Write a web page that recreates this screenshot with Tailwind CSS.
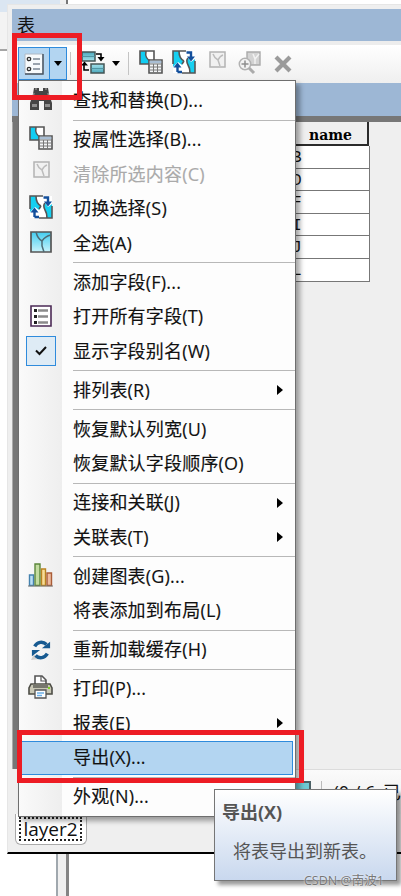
<!DOCTYPE html>
<html lang="zh-CN">
<head>
  <meta charset="UTF-8">
  <meta name="viewport" content="width=device-width, initial-scale=1.0">
  <title>表</title>
  <script src="https://cdn.jsdelivr.net/npm/@tailwindcss/browser@4"></script>
  <style>
    body { font-family: 'Open Sans', 'Noto Sans CJK SC', sans-serif; }
  </style>
</head>
<body class="relative w-[401px] h-[896px] overflow-hidden bg-white text-[18px] text-[#111]">

  <!-- icon sprites -->
  <svg class="absolute w-0 h-0">
    <defs>
      <linearGradient id="cyan" x1="0" y1="0" x2="0" y2="1"><stop offset="0" stop-color="#42cdf0"/><stop offset="1" stop-color="#c9f3fb"/></linearGradient>
      <linearGradient id="teal" x1="0" y1="0" x2="0" y2="1"><stop offset="0" stop-color="#4aa7bb"/><stop offset=".5" stop-color="#b5edf4"/><stop offset="1" stop-color="#4aa7bb"/></linearGradient>
    </defs>
    <symbol id="i-select" viewBox="0 0 24 24">
      <path d="M1 1h14v13H1z" fill="#fff"/>
      <path d="M1 1h6c-1 5 1 9 5 10v3H1z" fill="#11cdf2"/>
      <path d="M7 1c-1 5 1 9 5 10M1 1h14v13H1z" fill="none" stroke="#555" stroke-width="1.600"/>
      <path d="M10 10h13v13H10z" fill="#f3f5f7" stroke="#555" stroke-width="1.600"/>
      <path d="M10.700 10.700h11.600v2.600H10.700z" fill="#a9bed4"/>
      <path d="M10 14h13M10 17h13M10 20h13M14.500 14v9M18.500 14v9" stroke="#777" stroke-width="1"/>
    </symbol>
    <symbol id="i-switch" viewBox="0 0 24 24">
      <path d="M1 1h22v22H1z" fill="#fff"/>
      <path d="M1 1h6c0 5 1 8 5 10l-2 4-4-3-5 5zM16 8l3 4 4-3v14h-5c0-3 0-5-2-8-1-2-2-5 0-7z" fill="#15d0f1"/>
      <path d="M14 1H1v13M7 1c0 5 1 8 5 10M16 8c-2 2-1 5 0 7 2 3 2 5 2 8M10 23h13V11M10 14l2-3" fill="none" stroke="#555" stroke-width="1.600"/>
      <path d="M14.500 2.500H19V7M5.500 22v-5M5.500 22H10" fill="none" stroke="#134f9c" stroke-width="2.400"/>
      <path d="M15 6.500h8L19 11.500zM1.500 17.500l4-5 4 5z" fill="#134f9c"/>
    </symbol>
    <symbol id="i-clear" viewBox="0 0 17 17">
      <path d="M1 1h15v15H1z" fill="#f1f1f1" stroke="#b3b3b3" stroke-width="1.500"/>
      <path d="M4 3c1 3 3 5 5 6l2 6M14 4c-3 1-4 3-5 5" fill="none" stroke="#bcbcbc" stroke-width="1.500"/>
    </symbol>
    <symbol id="i-all" viewBox="0 0 22 22">
      <path d="M1 1h20v20H1z" fill="url(#cyan)" stroke="#555" stroke-width="1.700"/>
      <path d="M6 1c1 4 2 7 6 9v5l2 6M21 4c-5 1-7 3-9 6" fill="none" stroke="#4d6b75" stroke-width="1.500"/>
    </symbol>
    <symbol id="i-find" viewBox="0 0 24 24">
      <path d="M5 1h5v3h4V1h5l1 6 3 9v7h-8v-9h-5v9H1v-7l3-9z" fill="#454545"/>
      <path d="M3 17h5v3H3zM16 17h5v3h-5z" fill="#8f8f8f"/>
      <path d="M5 6l-1 7M19 6l1 7M6 2h2M16 2h2M9 8l-1 5M15 8l1 5" stroke="#aaa" stroke-width="1"/>
    </symbol>
    <symbol id="i-fields" viewBox="0 0 22 22">
      <path d="M1 1h20v20H1z" fill="#fff" stroke="#4b2a55" stroke-width="1.600"/>
      <path d="M4 4h3v3H4zM4 10h3v3H4zM4 16h3v3H4z" fill="#222"/>
      <path d="M8 5.500h10M8 11.500h10M8 17.500h10" stroke="#8b8b8b" stroke-width="2.500"/>
    </symbol>
    <symbol id="i-chart" viewBox="0 0 25 24">
      <path d="M1.500 12h4v10.500h-4z" fill="#b9dff5" stroke="#4482ae" stroke-width="1.400"/>
      <path d="M7 1h5v21.500H7z" fill="#c3dca0" stroke="#5b863b" stroke-width="1.400"/>
      <path d="M13.500 6h4v16.500h-4z" fill="#f8dc97" stroke="#b98321" stroke-width="1.400"/>
      <path d="M19 10h4.500v12.500H19z" fill="#edbba0" stroke="#a95c37" stroke-width="1.400"/>
      <path d="M0 23h25" stroke="#777"/>
    </symbol>
    <symbol id="i-reload" viewBox="0 0 22 22">
      <path d="M0 22l3-6 7 5z" fill="#d0d0d0"/>
      <path d="M4 7c3-5 9-6 13-2M18 15c-3 5-9 6-13 2" fill="none" stroke="#175a91" stroke-width="3.800"/>
      <path d="M21 2v7h-9zM1 18v-7h9z" fill="#175a91"/>
    </symbol>
    <symbol id="i-print" viewBox="0 0 25 24">
      <path d="M7 10V1h7l4 4v5z" fill="#fff" stroke="#555" stroke-width="1.600"/>
      <path d="M13 1v5h5" fill="none" stroke="#555" stroke-width="1.200"/>
      <path d="M3 9h19l2 4v6H1v-6z" fill="#c9c8b6" stroke="#4d4d46" stroke-width="1.600"/>
      <path d="M5 9h15v4H5z" fill="#77776d"/>
      <path d="M20 12h2v2h-2z" fill="#7ed321"/>
      <path d="M7 15h11v8H7z" fill="#fff" stroke="#555" stroke-width="1.300"/>
      <path d="M9 18h7M9 20.500h5" stroke="#6cb0e8" stroke-width="1.300"/>
    </symbol>
  </svg>

  <!-- application frame behind the window -->
  <div class="h-[4px] flex">
    <div class="w-[60px] bg-[#dbe6f2]"></div>
    <div class="w-[6px] bg-[#f0f0f0]"></div>
    <div class="w-[2px] bg-[#777]"></div>
  </div>
  <div class="flex h-[850px]">
    <div class="w-[7px] shrink-0">
      <div class="h-[8px] bg-[#dbe6f2]"></div>
      <div class="h-[39px] bg-[#f3f3f3] border-b-2 border-[#a5a5a5]"></div>
    </div>

    <!-- attribute table window -->
    <div class="flex-1 min-w-0 flex flex-col bg-[#efefef] border-l border-t border-[#e6e6e6] border-b-2 border-b-black pl-[4px] pt-[4px]">
      <div class="h-[32px] shrink-0 bg-[#9db7d5] pl-[5px] pt-[2px] leading-[28px]">表</div>

      <div class="h-[42px] shrink-0 border-t-4 border-[#ededed] bg-linear-to-b from-white to-[#efefef] flex items-start pl-[6px] pt-px">
        <div class="flex w-[49px] h-[33px] border border-[#2f8bdc] bg-[#b3d5f1] mt-px">
          <div class="w-[31px] border-r border-[#2f8bdc] flex items-center justify-center">
            <svg width="20" height="22" viewBox="0 0 20 22">
              <path d="M1 1h18v20H1z" fill="#f7fafc" stroke="#aeb8c4"/>
              <path d="M19 1v20H1" fill="none" stroke="#4a5663" stroke-width="1.500"/>
              <circle cx="5" cy="6" r="1.700" fill="none" stroke="#333" stroke-width="1.300"/><circle cx="5" cy="16" r="1.700" fill="none" stroke="#333" stroke-width="1.300"/>
              <path d="M9 6h7M9 11h7M9 16h7" stroke="#7b8794" stroke-width="1.300"/>
            </svg>
          </div>
          <div class="flex-1 flex items-center justify-center">
            <svg width="8" height="5" viewBox="0 0 8 5"><path d="M0 0h8L4 5z"/></svg>
          </div>
        </div>
        <div class="w-px h-[23px] bg-[#c4c4c4] mt-[6px] ml-[3px]"></div>
        <svg class="ml-[10px] mt-[4px]" width="24" height="24" viewBox="0 0 24 24">
          <path d="M1 2h13v9H1zM10 14h13v9H10z" fill="url(#teal)" stroke="#455" stroke-width="1.500"/>
          <path d="M1 6.500h13M10 18.500h13" stroke="#488a98" stroke-width=".8"/>
          <path d="M15 4h5v5M8 20H3v-5" fill="none" stroke="#000" stroke-width="1.600"/>
          <path d="M16.500 7h7L20 11.500zM0 15.500h7L3.500 11.500z"/>
        </svg>
        <svg class="ml-[7px] mt-[15px]" width="8" height="5" viewBox="0 0 8 5"><path d="M0 0h8L4 5z"/></svg>
        <div class="w-px h-[23px] bg-[#c4c4c4] mt-[6px] ml-[8px]"></div>
        <svg class="ml-[10px] mt-[4px]" width="24" height="24"><use href="#i-select"/></svg>
        <svg class="ml-[9px] mt-[4px]" width="24" height="24"><use href="#i-switch"/></svg>
        <svg class="ml-[13px] mt-[5px]" width="17" height="17"><use href="#i-clear"/></svg>
        <svg class="ml-[12px] mt-[5px]" width="24" height="24" viewBox="0 0 24 24">
          <path d="M9 1h13v13H9z" fill="#d3d3d3" stroke="#aaa" stroke-width="1.400"/>
          <path d="M15 3l2 5v5M21 3l-4 5" fill="none" stroke="#f2f2f2" stroke-width="1.500"/>
          <circle cx="7" cy="13" r="5.700" fill="#f3f3f3" stroke="#b2b2b2" stroke-width="1.500"/>
          <path d="M7 9.500v7M3.500 13h7" stroke="#8e8e8e" stroke-width="1.500"/>
          <path d="M11 17l5 5" stroke="#ababab" stroke-width="3"/>
        </svg>
        <svg class="ml-[12px] mt-[9px]" width="18" height="18" viewBox="0 0 18 18"><path d="M2 2l14 14M16 2L2 16" stroke="#9b9b9b" stroke-width="4.200"/></svg>
      </div>

      <div class="h-[33px] shrink-0 bg-[#9db7d5]"></div>

      <div class="flex-1 border-t-6 border-[#777] flex">
        <div class="w-[7px] shrink-0 bg-[#777] border-x border-[#aaa] mb-[83px]"></div>
        <div class="flex-1 min-w-0 flex flex-col">
          <!-- visible part of the name column -->
          <div class="flex-1 font-['Liberation_Mono'] text-[16px]">
            <div class="w-[350px] h-[24px] border-r-2 border-b-2 border-[#2b2b2b] pl-[290px] leading-[26px] text-[14px] font-bold text-black font-['DejaVu_Serif']">name</div>
            <div class="w-[351px] bg-white">
              <div class="h-[22.600px] border-b border-r border-[#777] pl-[273px] leading-[24px]">B</div>
              <div class="h-[22.600px] border-b border-r border-[#777] pl-[273px] leading-[24px]">D</div>
              <div class="h-[22.600px] border-b border-r border-[#777] pl-[273px] leading-[24px]">F</div>
              <div class="h-[22.600px] border-b border-r border-[#777] pl-[273px] leading-[24px]">I</div>
              <div class="h-[22.600px] border-b border-r border-[#777] pl-[273px] leading-[24px]">J</div>
              <div class="h-[22.600px] border-b border-r border-[#777] pl-[273px] leading-[24px]">L</div>
            </div>
          </div>
          <!-- record navigation -->
          <div class="h-[45px] border-t border-[#dcdcdc] bg-linear-to-b from-[#fbfbfb] to-[#ececec] flex items-start pl-[275px]">
            <div class="w-[17px] h-[16px] mt-[11px] border-2 border-[#4b6065] bg-[#6fc9d3]"></div>
            <div class="w-px h-[22px] mt-[11px] ml-[10px] bg-[#bbb]"></div>
            <div class="ml-[12px] mt-[10px] leading-[24px] whitespace-nowrap">(0 / 6 <span class="ml-[3px]">已</span></div>
          </div>
          <div class="h-[38px] flex">
            <div class="w-[72px] h-[31px] -ml-[4px] rounded-b-md border border-t-0 border-[#aaa] bg-white px-[3px] pt-[3px]">
              <div class="h-[24px] w-[63px] border-2 border-dotted border-[#222] text-center leading-[20px] text-[19px]">layer2</div>
            </div>
          </div>
        </div>
      </div>
    </div>
  </div>
  <div class="flex h-[42px]">
    <div class="w-[13px] ml-[56px] bg-[#f0f0f0] border-l-2 border-l-[#a0a8ae] border-r-3 border-r-[#858585]"></div>
  </div>

  <!-- dropdown menu -->
  <div class="absolute left-[18px] top-[80px] w-[278px] h-[737px] border border-[#6e6e6e] bg-[#fdfdfd] shadow-[4px_4px_5px_rgba(0,0,0,0.35)] tracking-[0.2px] [-webkit-text-stroke:0.15px]">
    <div class="h-full pt-[2.500px] bg-linear-to-r from-[#fafafa] to-[#eeeeee] bg-[length:43px_100%] bg-no-repeat">
      <div class="h-[34.600px] flex items-center"><span class="w-[43px] flex justify-center"><svg class="-mt-[4px]" width="24" height="24"><use href="#i-find"/></svg></span><span class="ml-[11px]">查找和替换(D)...</span></div>
      <div class="h-[4.300px] ml-[54px] flex items-center"><span class="w-full h-px bg-[#b8b8b8]"></span></div>
      <div class="h-[34.600px] flex items-center"><span class="w-[43px] flex justify-center"><svg class="-mt-[4px]" width="24" height="24"><use href="#i-select"/></svg></span><span class="ml-[11px]">按属性选择(B)...</span></div>
      <div class="h-[34.600px] flex items-center text-[#aaa]"><span class="w-[43px] flex justify-center"><svg class="-mt-[10px] ml-[2px]" width="17" height="17"><use href="#i-clear"/></svg></span><span class="ml-[11px]">清除所选内容(C)</span></div>
      <div class="h-[34.600px] flex items-center"><span class="w-[43px] flex justify-center"><svg class="-mt-[4px]" width="24" height="24"><use href="#i-switch"/></svg></span><span class="ml-[11px]">切换选择(S)</span></div>
      <div class="h-[34.600px] flex items-center"><span class="w-[43px] flex justify-center"><svg class="-mt-[3px]" width="22" height="22"><use href="#i-all"/></svg></span><span class="ml-[11px]">全选(A)</span></div>
      <div class="h-[4.300px] ml-[54px] flex items-center"><span class="w-full h-px bg-[#b8b8b8]"></span></div>
      <div class="h-[34.600px] flex items-center"><span class="ml-[54px]">添加字段(F)...</span></div>
      <div class="h-[34.600px] flex items-center"><span class="w-[43px] flex justify-center"><svg class="-mt-[2px]" width="22" height="22"><use href="#i-fields"/></svg></span><span class="ml-[11px]">打开所有字段(T)</span></div>
      <div class="h-[34.600px] flex items-center"><span class="w-[43px] flex justify-center"><span class="w-[30px] h-[30px] -mt-[2px] border border-[#2f8bdc] bg-[#deebf5] flex items-center justify-center"><svg width="12" height="10" viewBox="0 0 12 10"><path d="M1 4.500L4.500 8 11 1" fill="none" stroke="#111" stroke-width="2"/></svg></span></span><span class="ml-[11px]">显示字段别名(W)</span></div>
      <div class="h-[4.300px] ml-[54px] flex items-center"><span class="w-full h-px bg-[#b8b8b8]"></span></div>
      <div class="h-[34.600px] flex items-center justify-between pl-[54px] pr-[12px]"><span>排列表(R)</span><svg width="6" height="10" viewBox="0 0 6 10"><path d="M0 0l6 5-6 5z"/></svg></div>
      <div class="h-[4.300px] ml-[54px] flex items-center"><span class="w-full h-px bg-[#b8b8b8]"></span></div>
      <div class="h-[34.600px] flex items-center"><span class="ml-[54px]">恢复默认列宽(U)</span></div>
      <div class="h-[34.600px] flex items-center"><span class="ml-[54px]">恢复默认字段顺序(O)</span></div>
      <div class="h-[4.300px] ml-[54px] flex items-center"><span class="w-full h-px bg-[#b8b8b8]"></span></div>
      <div class="h-[34.600px] flex items-center justify-between pl-[54px] pr-[12px]"><span>连接和关联(J)</span><svg width="6" height="10" viewBox="0 0 6 10"><path d="M0 0l6 5-6 5z"/></svg></div>
      <div class="h-[34.600px] flex items-center justify-between pl-[54px] pr-[12px]"><span>关联表(T)</span><svg width="6" height="10" viewBox="0 0 6 10"><path d="M0 0l6 5-6 5z"/></svg></div>
      <div class="h-[4.300px] ml-[54px] flex items-center"><span class="w-full h-px bg-[#b8b8b8]"></span></div>
      <div class="h-[34.600px] flex items-center"><span class="w-[43px] flex justify-center"><svg class="-mt-[2px]" width="25" height="24"><use href="#i-chart"/></svg></span><span class="ml-[11px]">创建图表(G)...</span></div>
      <div class="h-[34.600px] flex items-center"><span class="ml-[54px]">将表添加到布局(L)</span></div>
      <div class="h-[4.300px] ml-[54px] flex items-center"><span class="w-full h-px bg-[#b8b8b8]"></span></div>
      <div class="h-[34.600px] flex items-center"><span class="w-[43px] flex justify-center"><svg width="20" height="20"><use href="#i-reload"/></svg></span><span class="ml-[11px]">重新加载缓存(H)</span></div>
      <div class="h-[4.300px] ml-[54px] flex items-center"><span class="w-full h-px bg-[#b8b8b8]"></span></div>
      <div class="h-[34.600px] flex items-center"><span class="w-[43px] flex justify-center"><svg class="-mt-[3px]" width="25" height="24"><use href="#i-print"/></svg></span><span class="ml-[11px]">打印(P)...</span></div>
      <div class="h-[34.600px] flex items-center justify-between pl-[54px] pr-[12px]"><span>报表(E)</span><svg width="6" height="10" viewBox="0 0 6 10"><path d="M0 0l6 5-6 5z"/></svg></div>
      <div class="h-[34.600px] mx-[2px] flex items-center border border-[#2f8bdc] bg-[#b3d5f1]"><span class="ml-[51px]">导出(X)...</span></div>
      <div class="h-[4.300px] ml-[54px] flex items-center"><span class="w-full h-px bg-[#b8b8b8]"></span></div>
      <div class="h-[34.600px] flex items-center"><span class="ml-[54px]">外观(N)...</span></div>
    </div>
  </div>

  <!-- red callouts -->
  <div class="absolute left-[12px] top-[33px] w-[70px] h-[67px] border-5 border-[#ed1c24]"></div>
  <div class="absolute left-[17px] top-[730px] w-[287px] h-[53px] border-5 border-[#ed1c24]"></div>

  <!-- tooltip -->
  <div class="absolute left-[214px] top-[789px] w-[183px] h-[92px] border border-[#767676] bg-linear-to-b from-white to-[#c9d8ee] text-[#555] shadow-[4px_4px_4px_rgba(0,0,0,0.4)]">
    <div class="pl-[7px] pt-[9px] leading-[26px] font-bold">导出(X)</div>
    <div class="pl-[18px] pt-[13px] leading-[26px] whitespace-nowrap">将表导出到新表。</div>
  </div>

  <div class="absolute left-[304px] top-[871px] text-[12.500px] leading-[20px] whitespace-nowrap text-[#777] [text-shadow:0_0_2px_white]">CSDN @南波1</div>
</body>
</html>
